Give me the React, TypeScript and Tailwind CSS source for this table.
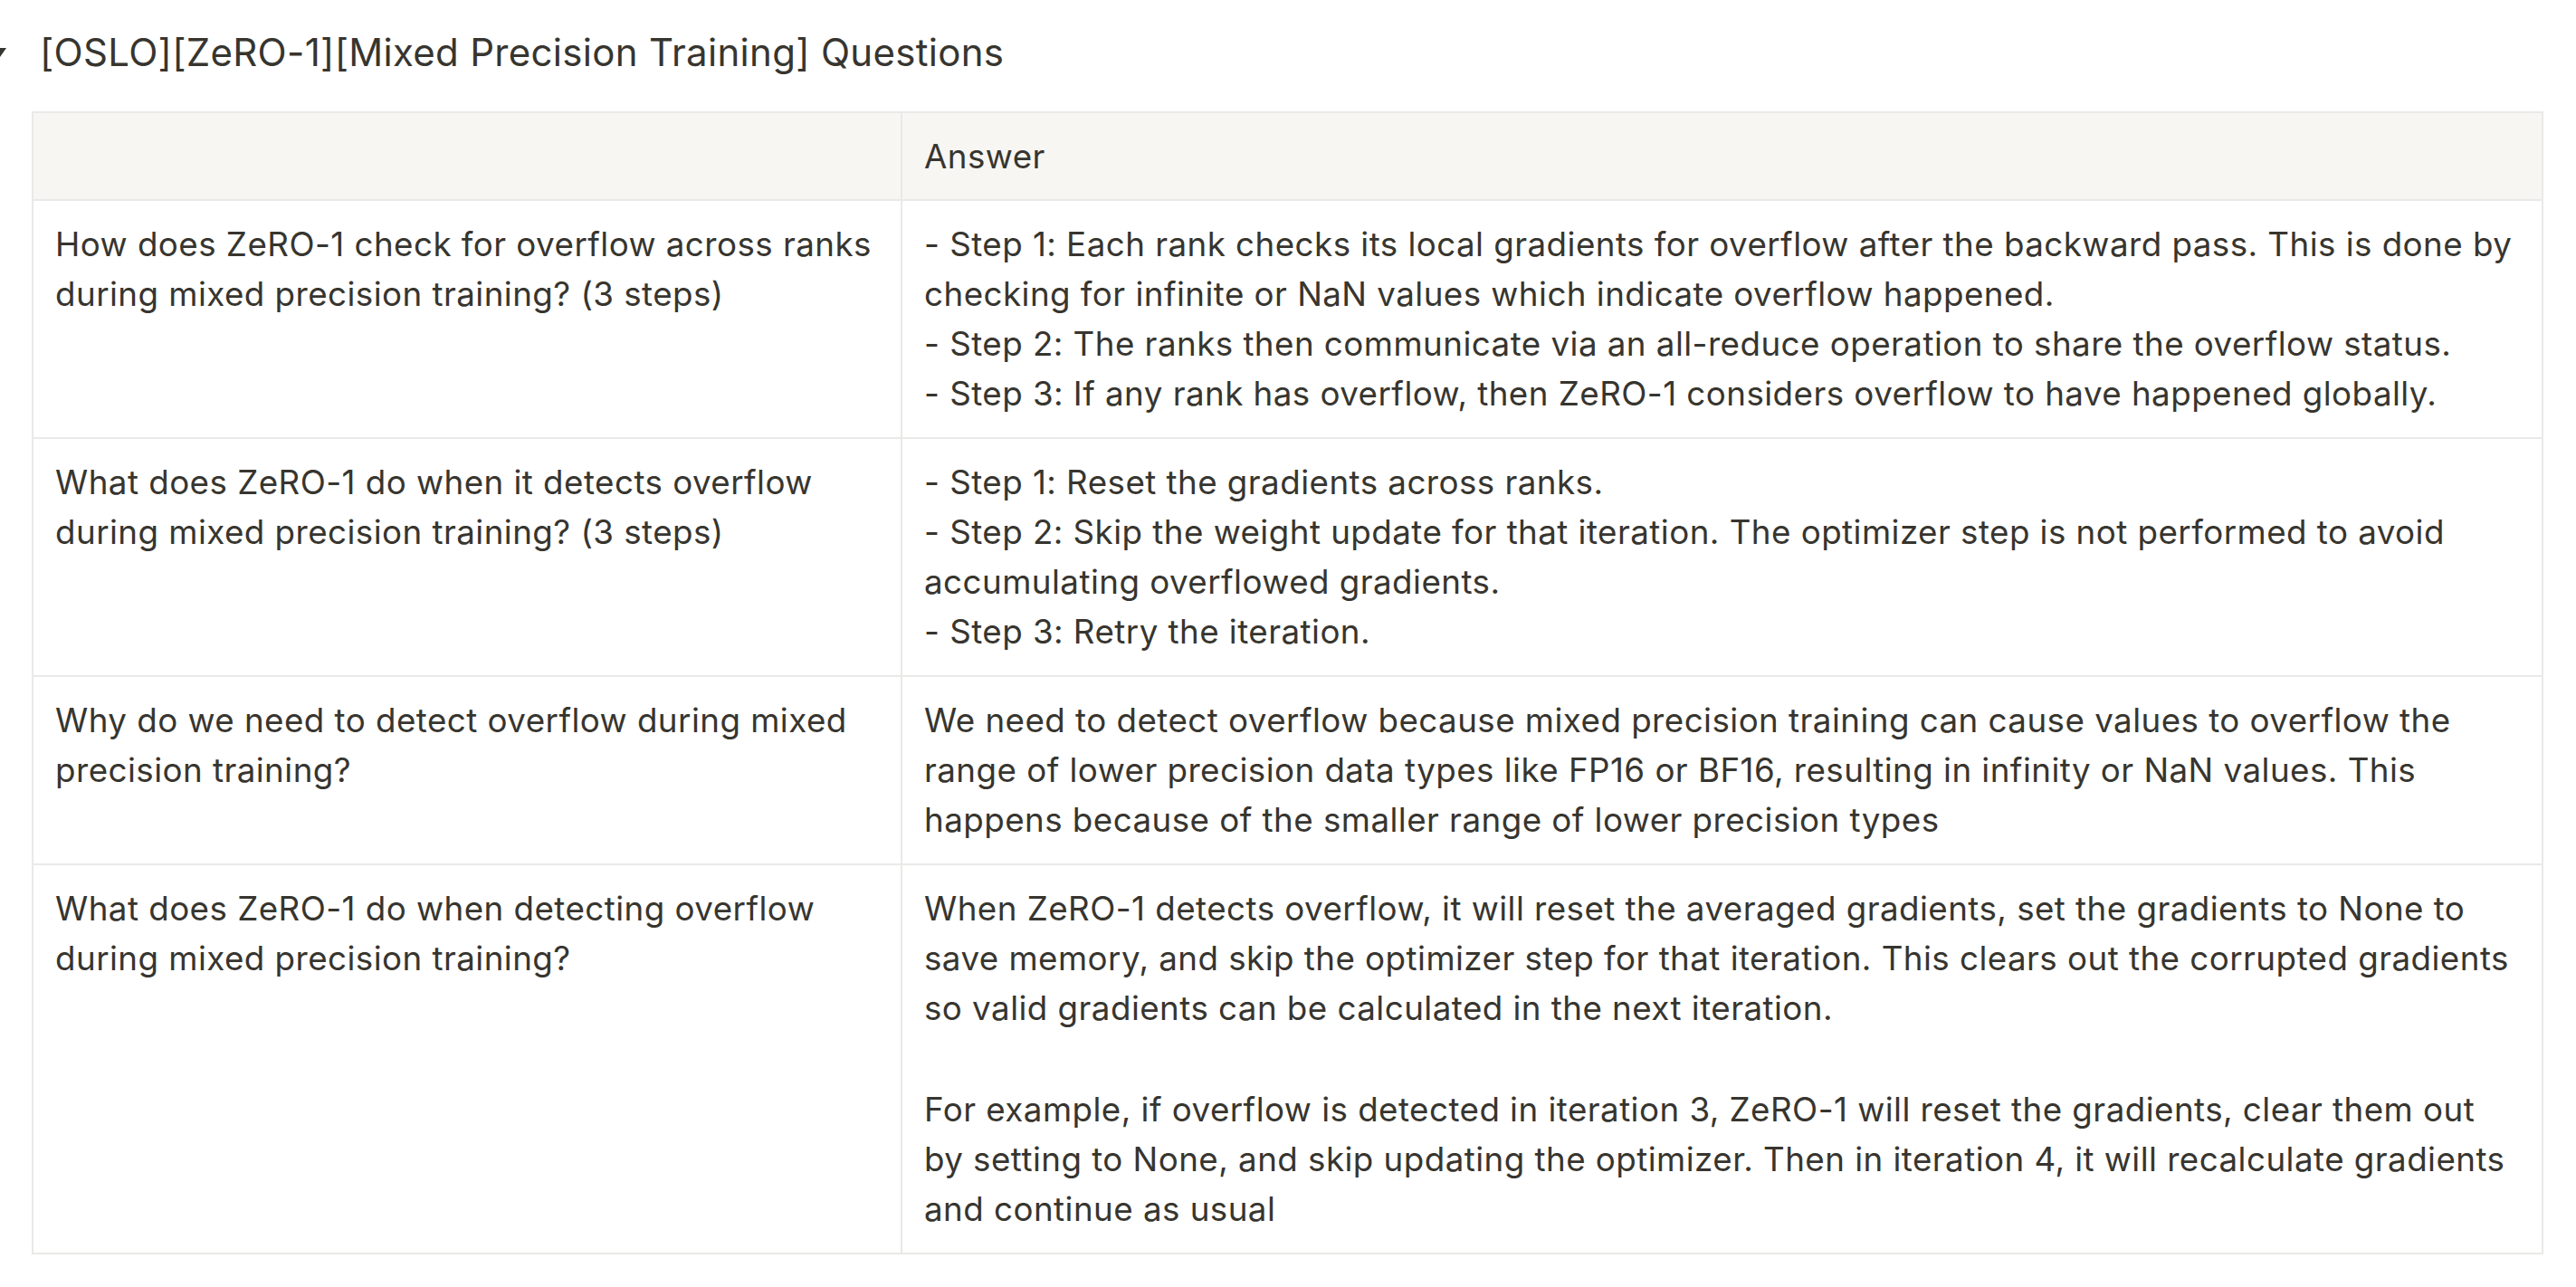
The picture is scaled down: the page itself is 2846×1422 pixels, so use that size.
import React from "react";

const rows: { q: string[]; a: string[] }[] = [
  {
    q: ["How does ZeRO-1 check for overflow across ranks", "during mixed precision training? (3 steps)"],
    a: [
      "- Step 1: Each rank checks its local gradients for overflow after the backward pass. This is done by",
      "checking for infinite or NaN values which indicate overflow happened.",
      "- Step 2: The ranks then communicate via an all-reduce operation to share the overflow status.",
      "- Step 3: If any rank has overflow, then ZeRO-1 considers overflow to have happened globally.",
    ],
  },
  {
    q: ["What does ZeRO-1 do when it detects overflow", "during mixed precision training? (3 steps)"],
    a: [
      "- Step 1: Reset the gradients across ranks.",
      "- Step 2: Skip the weight update for that iteration. The optimizer step is not performed to avoid",
      "accumulating overflowed gradients.",
      "- Step 3: Retry the iteration.",
    ],
  },
  {
    q: ["Why do we need to detect overflow during mixed", "precision training?"],
    a: [
      "We need to detect overflow because mixed precision training can cause values to overflow the",
      "range of lower precision data types like FP16 or BF16, resulting in infinity or NaN values. This",
      "happens because of the smaller range of lower precision types",
    ],
  },
  {
    q: ["What does ZeRO-1 do when detecting overflow", "during mixed precision training?"],
    a: [
      "When ZeRO-1 detects overflow, it will reset the averaged gradients, set the gradients to None to",
      "save memory, and skip the optimizer step for that iteration. This clears out the corrupted gradients",
      "so valid gradients can be calculated in the next iteration.",
      "",
      "For example, if overflow is detected in iteration 3, ZeRO-1 will reset the gradients, clear them out",
      "by setting to None, and skip updating the optimizer. Then in iteration 4, it will recalculate gradients",
      "and continue as usual",
    ],
  },
];

const Lines = ({ lines }: { lines: string[] }) => (
  <>
    {lines.map((l, i) => (
      <div key={i} className={l === "" ? "h-[57px]" : "whitespace-nowrap h-[55px]"}>
        {l}
      </div>
    ))}
  </>
);

export default function App() {
  return (
    <div
      className="min-h-screen bg-white text-[#37352f] overflow-hidden"
      style={{ fontFamily: "Inter, 'Noto Sans', sans-serif" }}
    >
      <div className="pt-[26px] flex items-center h-[89px]">
        <svg width="14" height="10" viewBox="0 0 14 10" className="-ml-[7px] mr-[37px] shrink-0">
          <path d="M0 0 L14 0 L7 10 Z" fill="#37352f" />
        </svg>
        <span className="text-[42px] leading-[63px] tracking-[0.3px]">
          [OSLO][ZeRO-1][Mixed Precision Training] Questions
        </span>
      </div>

      <div className="pt-[34px] pl-[35px]">
        <table className="border-collapse table-fixed w-[2773px] text-[36.75px] leading-[55px] tracking-[0.45px]">
          <colgroup>
            <col className="w-[960px]" />
            <col className="w-[1813px]" />
          </colgroup>
          <thead>
            <tr className="bg-[#f7f6f3]">
              <th className="border-2 border-[#e9e9e7] px-[24px] py-[20px] font-normal text-left"></th>
              <th className="border-2 border-[#e9e9e7] px-[24px] py-[20px] font-normal text-left">Answer</th>
            </tr>
          </thead>
          <tbody>
            {rows.map((r, i) => (
              <tr key={i}>
                <td className="border-2 border-[#e9e9e7] px-[24px] pt-[20px] pb-[21px] align-top">
                  <Lines lines={r.q} />
                </td>
                <td className="border-2 border-[#e9e9e7] px-[24px] pt-[20px] pb-[21px] align-top">
                  <Lines lines={r.a} />
                </td>
              </tr>
            ))}
          </tbody>
        </table>
      </div>
    </div>
  );
}
